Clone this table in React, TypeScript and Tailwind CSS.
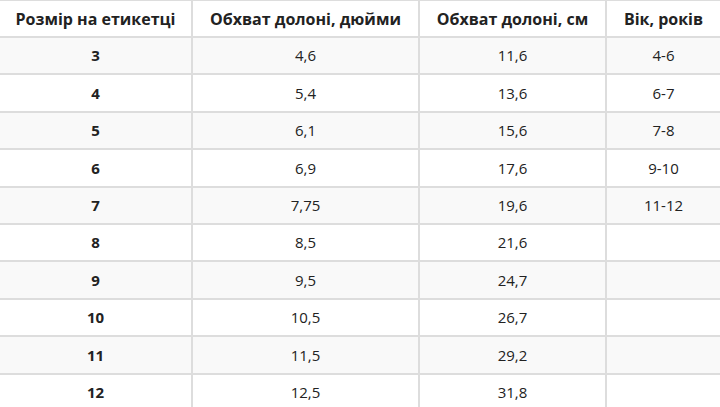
const rows: [string, string, string, string][] = [
  ["3", "4,6", "11,6", "4-6"],
  ["4", "5,4", "13,6", "6-7"],
  ["5", "6,1", "15,6", "7-8"],
  ["6", "6,9", "17,6", "9-10"],
  ["7", "7,75", "19,6", "11-12"],
  ["8", "8,5", "21,6", ""],
  ["9", "9,5", "24,7", ""],
  ["10", "10,5", "26,7", ""],
  ["11", "11,5", "29,2", ""],
  ["12", "12,5", "31,8", ""],
];

const headers = ["Розмір на етикетці", "Обхват долоні, дюйми", "Обхват долоні, см", "Вік, років"];

export default function App() {
  return (
    <div className="h-[407px] w-[720px] overflow-hidden bg-white font-['Open_Sans',sans-serif] text-[15px] text-[#222]">
      <table className="w-full table-fixed border-separate border-spacing-0">
        <colgroup>
          <col className="w-[191px]" />
          <col className="w-[227px]" />
          <col className="w-[187px]" />
          <col />
        </colgroup>
        <thead>
          <tr>
            {headers.map((h, i) => (
              <th
                key={h}
                className={`h-[38px] border-t border-b-2 border-[#dddddd] p-0 text-center text-[16px] font-bold ${i > 0 ? "border-l-2" : ""}`}
              >
                {h}
              </th>
            ))}
          </tr>
        </thead>
        <tbody>
          {rows.map((r, ri) => (
            <tr key={r[0]} className={ri % 2 === 0 ? "bg-[#f9f9f9]" : "bg-white"}>
              {r.map((c, ci) => (
                <td
                  key={ci}
                  className={`h-[37.4px] border-b-2 border-[#dddddd] p-0 text-center ${ci === 0 ? "font-bold" : ""} ${ci > 0 ? "border-l-2" : ""}`}
                >
                  {c}
                </td>
              ))}
            </tr>
          ))}
        </tbody>
      </table>
    </div>
  );
}
